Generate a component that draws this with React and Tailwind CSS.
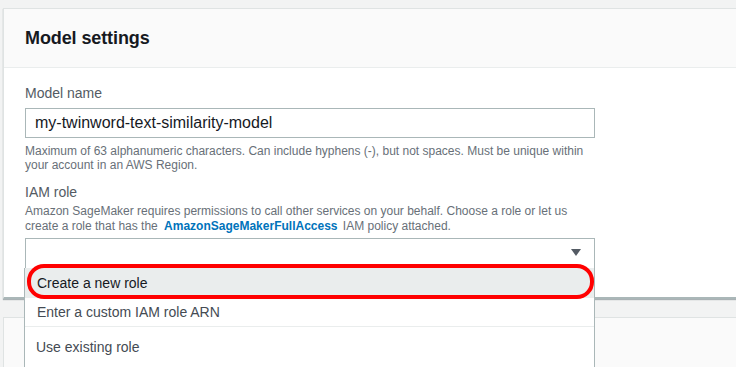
import React from 'react';

const FONT = { fontFamily: '"Liberation Sans", Arial, sans-serif' };

const OPTIONS = ['Enter a custom IAM role ARN', 'Use existing role'];

const App = () => {
  return (
    <div className="w-[736px] h-[367px] overflow-hidden bg-[#f2f3f3] pt-[8px] pl-[3px]" style={FONT}>
      <div className="bg-white border-l border-t border-[#dfe3e3] border-b-2 border-b-[#aab7b8] shadow-[0_1px_1px_rgba(0,28,36,0.3)]">
        <div className="h-[59px] bg-[#fafafa] border-b border-[#eaeded] flex items-center px-[21px]">
          <h2 className="text-[18px] font-bold text-[#16191f] tracking-[-0.1px]">Model settings</h2>
        </div>
        <div className="px-[21px] pt-[15px] pb-[28px]">
          <div className="text-[14px] text-[#545b64] leading-[20px]">Model name</div>
          <div className="mt-[5px] w-[570px] h-[30px] border border-[#aab7b8] flex items-center px-[9px] text-[16px] text-[#16191f]">
            my-twinword-text-similarity-model
          </div>
          <p className="mt-[6px] text-[12px] leading-[14px] text-[#687078] w-[575px]">
            Maximum of 63 alphanumeric characters. Can include hyphens (-), but not spaces. Must be unique within
            your account in an AWS Region.
          </p>
          <div className="mt-[10px] text-[14px] text-[#545b64] leading-[20px]">IAM role</div>
          <p className="mt-[2px] text-[12px] leading-[15px] text-[#687078] w-[575px]">
            Amazon SageMaker requires permissions to call other services on your behalf. Choose a role or let us
            create a role that has the <span className="ml-[3px] mr-[2px] font-bold text-[#0073bb]">AmazonSageMakerFullAccess</span>
            {' '}IAM policy attached.
          </p>
          <div className="relative mt-[4px] w-[570px]">
            <div className="h-[31px] border border-[#aab7b8] flex items-center justify-end pr-[13px] pb-[2px]">
              <svg width="10" height="7" viewBox="0 0 10 7">
                <path d="M0 0 H10 L5 7 Z" fill="#545b64" />
              </svg>
            </div>
            <div className="absolute left-[-1px] top-[30px] w-[571px] h-[120px] bg-white border-l border-r border-[#aab7b8] z-10">
              <div className="relative h-[30px] bg-[#eaeded] flex items-center pl-[12px] text-[14px] text-[#16191f]">
                Create a new role
                <div className="absolute left-[2px] right-0 top-[-4px] h-[35px] rounded-[17px] border-[4px] border-[#ff0000]" />
              </div>
              <div className="h-[29px] flex items-center pl-[12px] text-[14px] text-[#444b53] border-b border-[#eaeded]">
                {OPTIONS[0]}
              </div>
              <div className="h-[40px] flex items-center pl-[11px] text-[14px] text-[#444b53]">{OPTIONS[1]}</div>
            </div>
          </div>
        </div>
      </div>
      <div className="mt-[18px] h-[60px] bg-[#fafafa] border-l border-t border-[#dfe3e3]" />
    </div>
  );
};

export default App;
